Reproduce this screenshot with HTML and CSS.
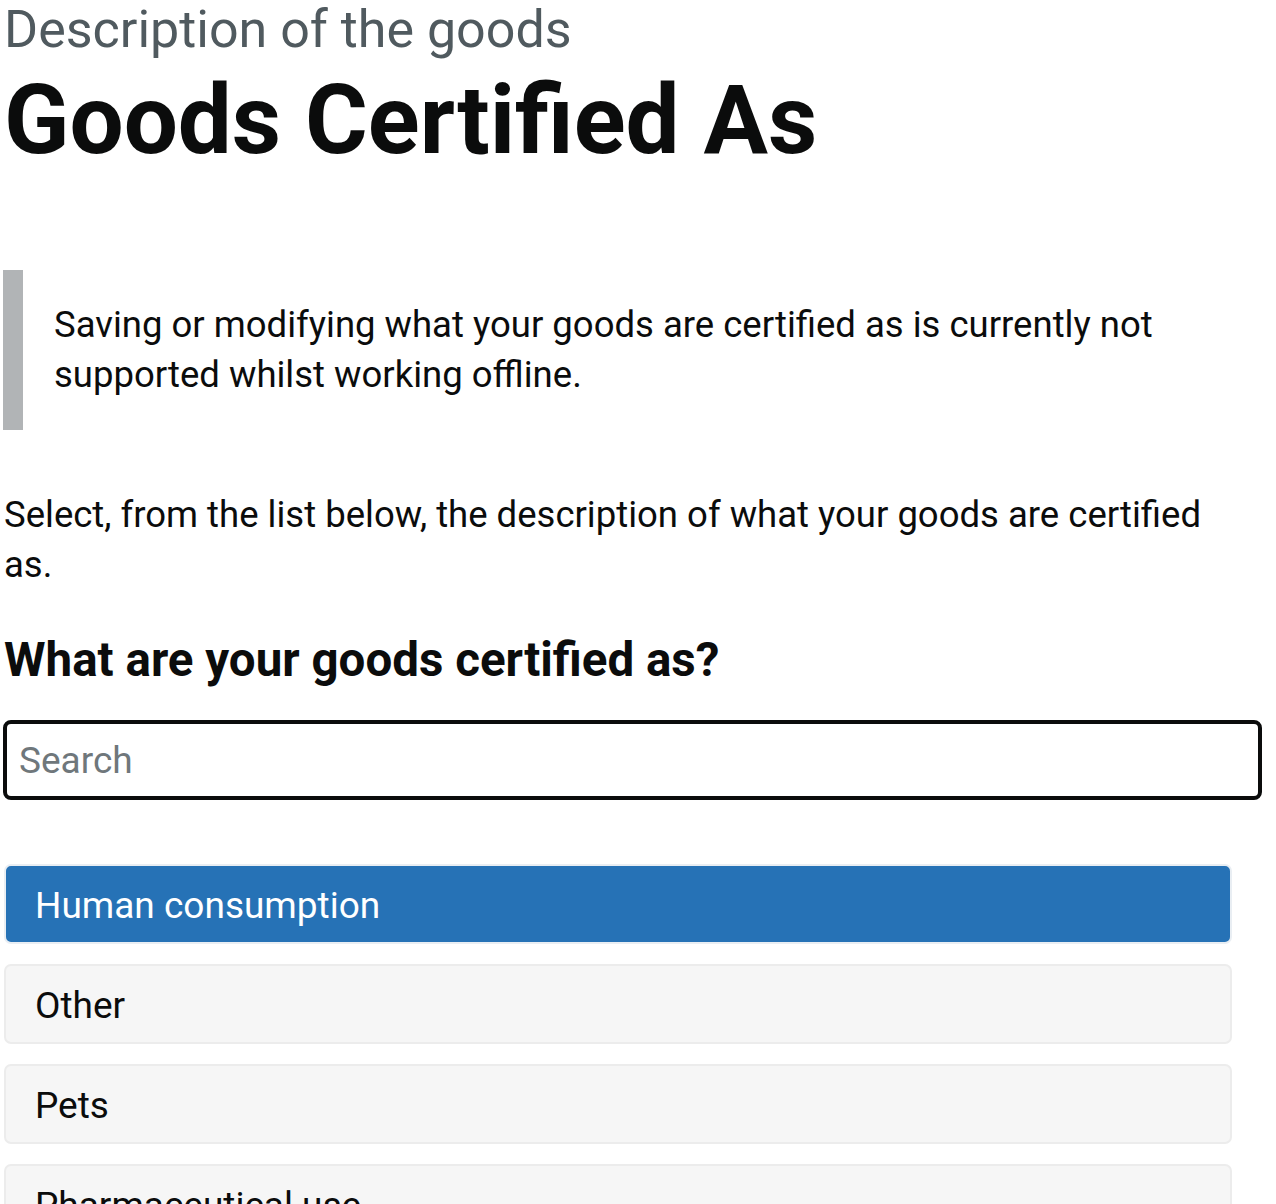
FILE: index.html
```html
<!DOCTYPE html>
<html lang="en">
<head>
<meta charset="utf-8">
<title>Goods Certified As</title>
<link rel="stylesheet" href="styles.css">
</head>
<body>
<main class="page">
  <span class="caption">Description of the goods</span>
  <h1 class="title">Goods Certified As</h1>
  <div class="inset">
    <p>Saving or modifying what your goods are certified as is currently not supported whilst working offline.</p>
  </div>
  <p class="body">Select, from the list below, the description of what your goods are certified as.</p>
  <h2 class="question">What are your goods certified as?</h2>
  <input class="search" type="text" placeholder="Search">
  <ul class="options">
    <li class="option selected">Human consumption</li>
    <li class="option">Other</li>
    <li class="option">Pets</li>
    <li class="option">Pharmaceutical use</li>
  </ul>
</main>
</body>
</html>
```

FILE: styles.css
```css
html, body {
  margin: 0;
  padding: 0;
  background: #ffffff;
}

body {
  font-family: Roboto, "Liberation Sans", sans-serif;
  color: #0b0c0c;
}

.page {
  padding: 0 14px 0 3px;
}

.caption {
  display: block;
  margin-bottom: 10px;
  font-size: 52px;
  line-height: 60px;
  color: #505a5f;
  font-weight: 400;
  padding-left: 1px;
}

.title {
  margin: 0 0 100px;
  font-size: 96px;
  line-height: 100px;
  font-weight: 700;
  padding-left: 1px;
}

.inset {
  margin: 0 0 60px;
  padding: 30px 30px 30px 31px;
  border-left: 20px solid #b1b4b6;
}

.inset p {
  margin: 0;
  font-size: 36.5px;
  line-height: 50px;
}

.body {
  max-width: 1225px;
  margin: 0 0 40px;
  font-size: 36.5px;
  line-height: 50px;
  padding-left: 1px;
}

.question {
  margin: 0 0 30px;
  font-size: 47.5px;
  line-height: 60px;
  font-weight: 700;
  padding-left: 1px;
}

.search {
  display: block;
  box-sizing: border-box;
  width: 100%;
  height: 80px;
  margin: 0 0 64px;
  padding: 0 12px;
  border: 4px solid #0b0c0c;
  border-radius: 8px;
  font-family: inherit;
  font-size: 37px;
  color: #0b0c0c;
  outline: none;
}

.search::placeholder {
  color: #6f777b;
}

.options {
  list-style: none;
  margin: 0 30px 0 1px;
  padding: 0;
  display: flex;
  flex-direction: column;
  gap: 20px;
}

.option {
  box-sizing: border-box;
  height: 80px;
  display: flex;
  align-items: center;
  padding: 2px 30px 0 29px;
  background: #f6f6f6;
  border: 2px solid #ececec;
  border-radius: 7px;
  font-size: 37px;
}

.option.selected {
  background: #2672b6;
  border-color: #e9eef3;
  color: #ffffff;
}
```
